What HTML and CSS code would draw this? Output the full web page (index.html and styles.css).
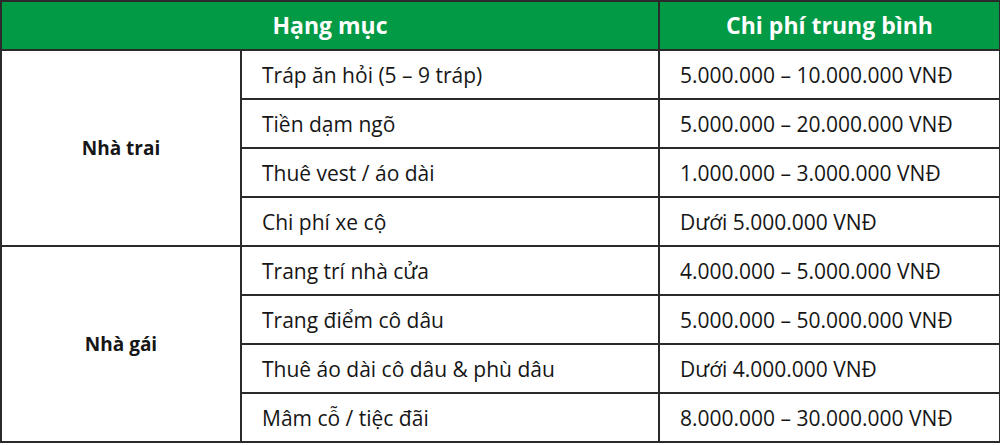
FILE: index.html
```html
<!DOCTYPE html>
<html lang="vi">
<head>
<meta charset="utf-8">
<link rel="stylesheet" href="styles.css">
</head>
<body>
<table class="cost">
  <colgroup>
    <col class="c1"><col class="c2"><col class="c3">
  </colgroup>
  <thead>
    <tr>
      <th colspan="2">Hạng mục</th>
      <th>Chi phí trung bình</th>
    </tr>
  </thead>
  <tbody>
    <tr><td class="side" rowspan="4">Nhà trai</td><td class="item">Tráp ăn hỏi (5 – 9 tráp)</td><td class="price">5.000.000 – 10.000.000 VNĐ</td></tr>
    <tr><td class="item">Tiền dạm ngõ</td><td class="price">5.000.000 – 20.000.000 VNĐ</td></tr>
    <tr><td class="item">Thuê vest / áo dài</td><td class="price">1.000.000 – 3.000.000 VNĐ</td></tr>
    <tr><td class="item">Chi phí xe cộ</td><td class="price">Dưới 5.000.000 VNĐ</td></tr>
    <tr><td class="side" rowspan="4">Nhà gái</td><td class="item">Trang trí nhà cửa</td><td class="price">4.000.000 – 5.000.000 VNĐ</td></tr>
    <tr><td class="item">Trang điểm cô dâu</td><td class="price">5.000.000 – 50.000.000 VNĐ</td></tr>
    <tr><td class="item">Thuê áo dài cô dâu &amp; phù dâu</td><td class="price">Dưới 4.000.000 VNĐ</td></tr>
    <tr><td class="item">Mâm cỗ / tiệc đãi</td><td class="price">8.000.000 – 30.000.000 VNĐ</td></tr>
  </tbody>
</table>
</body>
</html>
```
FILE: styles.css
```css
html, body {
  margin: 0;
  padding: 0;
  background: #ffffff;
}
.cost {
  border-collapse: collapse;
  width: 999px;
  table-layout: fixed;
  font-family: "Open Sans", "Noto Sans", sans-serif;
  color: #161616;
}
.c1 { width: 240px; }
.c2 { width: 418px; }
.c3 { width: 341px; }
.cost th, .cost td {
  border: 2px solid #2a2a2a;
  padding: 0;
  height: 49px;
  box-sizing: border-box;
}
.cost th {
  background: #029a45;
  color: #ffffff;
  font-size: 23px;
  font-weight: 700;
  text-align: center;
  line-height: 1;
}
.cost td {
  font-size: 21px;
  line-height: 1;
}
.cost td.side {
  font-size: 19px;
  font-weight: 700;
  text-align: center;
}
.cost td.item,
.cost td.price {
  padding-left: 20px;
  padding-top: 2px;
}
```
